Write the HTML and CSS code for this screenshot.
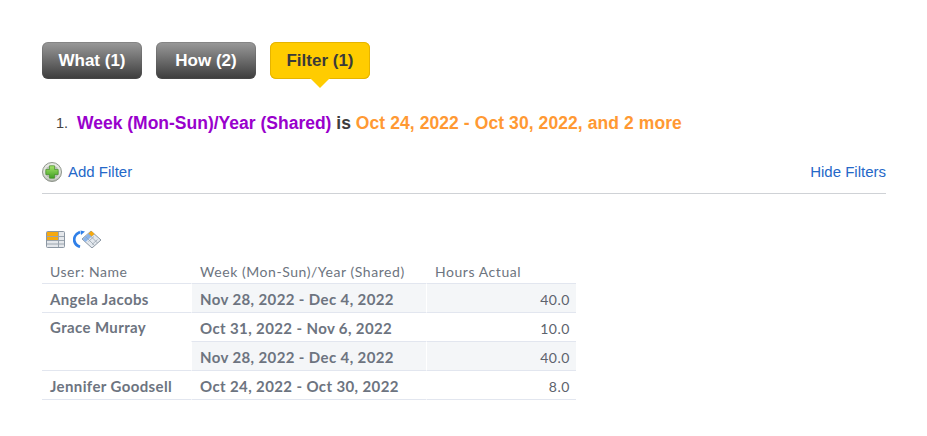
FILE: index.html
```html
<!DOCTYPE html>
<html lang="en">
<head>
<meta charset="utf-8">
<title>Filter report</title>
<link rel="stylesheet" href="styles.css">
</head>
<body>
<main class="page">
  <nav class="tabs">
    <button class="tab">What (1)</button>
    <button class="tab">How (2)</button>
    <button class="tab tab-active">Filter (1)</button>
  </nav>
  <ol class="filters">
    <li><span class="attr">Week (Mon-Sun)/Year (Shared)</span> <span class="op">is</span> <span class="val">Oct 24, 2022 - Oct 30, 2022, and 2 more</span></li>
  </ol>
  <div class="actions">
    <a class="add">
      <svg class="plus" width="20" height="20" viewBox="0 0 20 20">
        <defs>
          <radialGradient id="ring" cx="50%" cy="35%" r="65%"><stop offset="0" stop-color="#f6f6f2"/><stop offset="0.75" stop-color="#dcdfd8"/><stop offset="1" stop-color="#a3a8a0"/></radialGradient>
          <linearGradient id="gr" x1="0" y1="0" x2="0" y2="1"><stop offset="0" stop-color="#a6e56a"/><stop offset="1" stop-color="#3f9f22"/></linearGradient>
        </defs>
        <circle cx="10" cy="10" r="9.500" fill="url(#ring)" stroke="#8f958c" stroke-width="1"/>
        <circle cx="10" cy="10" r="6.800" fill="#b4bab0"/>
        <path d="M7.500 3.800h5v3.700h3.700v5h-3.700v3.700h-5v-3.700H3.800v-5h3.700z" fill="url(#gr)" stroke="#3c8a20" stroke-width=".6"/>
      </svg>
      <span>Add Filter</span>
    </a>
    <a class="hide">Hide Filters</a>
  </div>
  <div class="icons">
    <svg width="19" height="17" viewBox="0 0 19 17">
      <rect x=".5" y=".5" width="18" height="16" rx="1" fill="#e4e7eb" stroke="#8c97a3"/>
      <rect x="1" y="1" width="11" height="4" fill="#f6a90f"/>
      <rect x="1" y="6" width="11" height="3" fill="#f6a90f"/>
      <path d="M1 5.500h17M1 9.500h17M1 13h17M12.500 1v15" stroke="#9aa4ae" fill="none"/>
    </svg>
    <svg width="30" height="18" viewBox="0 0 30 18">
      <path d="M7 2C2.500 4 .5 8 1.500 11.500 2.200 14 4.500 16 7 16.800" fill="none" stroke="#2f7fe8" stroke-width="2.800"/>
      <path d="M7.500 .5 12 1.500 8 5z" fill="#2f7fe8"/>
      <path d="M9 9 18 1l10 9-9 8z" fill="#e3e8ee" stroke="#8c97a3"/>
      <path d="M9.500 9 18 1.500l3 3-8.500 7.500z" fill="#8ab4ea"/>
      <path d="M15.500 3.500 18.500 1l3 3-3 2.500z" fill="#f6a90f"/>
      <path d="M12.500 6.500l9 9M15.500 4l9 9M19 14.500l5.500-5M15.500 11.500l5.500-5" stroke="#9aa4ae" fill="none" stroke-width=".8"/>
    </svg>
  </div>
  <table class="report">
    <thead>
      <tr><th class="c1">User: Name</th><th class="c2">Week (Mon-Sun)/Year (Shared)</th><th class="c3">Hours Actual</th></tr>
    </thead>
    <tbody>
      <tr class="shade"><td class="c1 strong">Angela Jacobs</td><td class="c2 strong">Nov 28, 2022 - Dec 4, 2022</td><td class="c3 num">40.0</td></tr>
      <tr><td class="c1 strong" rowspan="2">Grace Murray</td><td class="c2 strong">Oct 31, 2022 - Nov 6, 2022</td><td class="c3 num">10.0</td></tr>
      <tr class="shade"><td class="c2 strong">Nov 28, 2022 - Dec 4, 2022</td><td class="c3 num">40.0</td></tr>
      <tr><td class="c1 strong">Jennifer Goodsell</td><td class="c2 strong">Oct 24, 2022 - Oct 30, 2022</td><td class="c3 num">8.0</td></tr>
    </tbody>
  </table>
</main>
</body>
</html>
```
FILE: styles.css
```css
* { box-sizing: border-box; }
html, body { margin: 0; background: #fff; }
.page {
  width: 927px;
  height: 436px;
  padding: 42px 41px 0 42px;
  font-family: "Liberation Sans", Arial, sans-serif;
  overflow: hidden;
}
.tabs { display: flex; gap: 14px; height: 37px; }
.tab {
  position: relative;
  width: 100px;
  height: 37px;
  padding: 1px 0 0;
  border: 0;
  border-radius: 6px;
  background: linear-gradient(#9a9a9a, #3c3c3c);
  box-shadow: inset 0 0 0 1px rgba(90,90,90,.3);
  color: #fff;
  font: bold 17px "Liberation Sans", Arial, sans-serif;
}
.tab-active {
  background: #ffcc00;
  box-shadow: inset 0 0 0 1px #e6b400;
  color: #3a3a3a;
}
.tab-active::after {
  content: "";
  position: absolute;
  left: 40px;
  top: 36px;
  border-style: solid;
  border-width: 10px 10px 0;
  border-color: #ffcc00 transparent transparent;
}
.filters {
  margin: 34px 0 0;
  padding: 0 0 0 35px;
  height: 24px;
  list-style: none;
  line-height: 21px;
  font-size: 17.500px;
  font-weight: bold;
  position: relative;
}
.filters::before {
  content: "1.";
  position: absolute;
  left: 14px;
  font-size: 14.500px;
  font-weight: normal;
  color: #444;
}
.attr { color: #9900cc; }
.op { color: #3d3d3d; }
.val { color: #ff9933; letter-spacing: .08px; }
.actions {
  display: flex;
  justify-content: space-between;
  align-items: center;
  height: 44px;
  margin-top: 13px;
  border-bottom: 1px solid #cfd2d6;
  font-size: 15px;
  color: #2468c8;
}
.actions a { color: #2468c8; }
.add { display: flex; align-items: center; gap: 6px; }
.icons {
  display: flex;
  align-items: center;
  gap: 8px;
  height: 18px;
  margin: 36px 0 0 4px;
}
.report {
  border-collapse: separate;
  border-spacing: 0;
  table-layout: fixed;
  width: 534px;
  margin-top: 8px;
  font-family: Lato, "Open Sans", sans-serif;
  font-size: 14px;
  color: #6d7480;
  letter-spacing: .55px;
}
.report th {
  height: 28px;
  font-weight: normal;
  text-align: left;
  padding: 3px 0 0 8px;
  border-bottom: 1px solid #e2e6ef;
}
.report td {
  height: 29px;
  padding: 2px 6px 0 8px;
  border-bottom: 1px solid #e2e6ef;
  vertical-align: middle;
}
.report td[rowspan] { vertical-align: top; padding-top: 5px; }
.c1 { width: 149px; }
.c2 { width: 235px; }
.c3 { width: 150px; }
th.c2, td.c2, th.c3, td.c3 { border-left: 1px solid #fff; }
.report .strong { font-weight: 700; font-size: 15px; letter-spacing: .38px; }
.num { text-align: right; color: #5d636d; }
.shade .c2, .shade .c3 { background: #f4f6f8; }
```
